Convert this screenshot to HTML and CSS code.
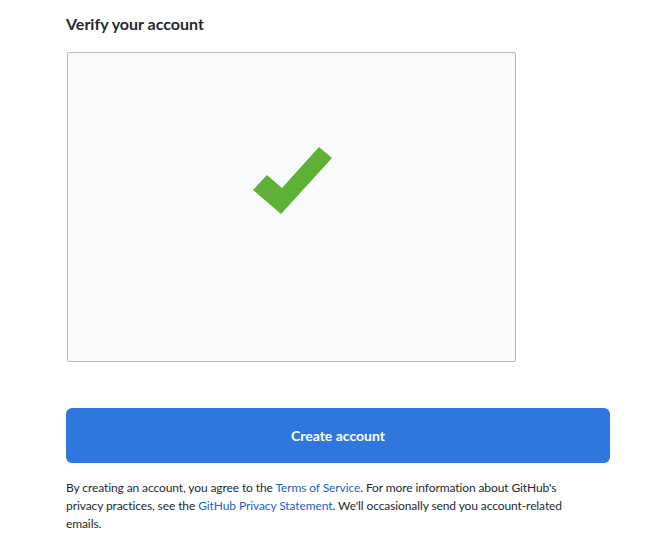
FILE: index.html
```html
<!DOCTYPE html>
<html>
<head>
<meta charset="utf-8">
<link rel="stylesheet" href="styles.css">
</head>
<body>
<main class="page">
  <h2 class="title">Verify your account</h2>
  <div class="captcha">
    <svg class="check" width="80" height="68" viewBox="253 147 80 68">
      <polygon points="253,190 267,175 282,188 319,147 332,158 281,214" fill="#5db134"/>
    </svg>
  </div>
  <button class="create">Create account</button>
  <p class="legal">By creating an account, you agree to the <a href="#">Terms of Service</a>. For more information about GitHub's privacy practices, see the <a href="#">GitHub Privacy Statement</a>. We'll occasionally send you account-related emails.</p>
</main>
</body>
</html>
```
FILE: styles.css
```css
html, body {
  margin: 0;
  padding: 0;
  background: #ffffff;
}
body {
  font-family: Lato, "Liberation Sans", sans-serif;
  color: #24292f;
}
.page {
  padding: 12px 56px 0 66px;
  width: 544px;
}
.title {
  margin: 0;
  font-size: 16px;
  font-weight: 700;
  line-height: 24px;
  color: #24292f;
}
.captcha {
  margin-top: 16px;
  margin-left: 1px;
  width: 447px;
  height: 308px;
  border: 1px solid #b9b9b9;
  border-radius: 2px;
  background: #f9fafb;
  display: flex;
  align-items: flex-start;
}
.check {
  display: block;
  margin-top: 94px;
  margin-left: 185px;
}
.create {
  display: block;
  margin-top: 46px;
  width: 544px;
  height: 55px;
  border: none;
  border-radius: 6px;
  background: #2e77de;
  color: #ffffff;
  font-family: inherit;
  font-size: 14px;
  font-weight: 700;
  cursor: pointer;
}
.legal {
  margin: 16px 0 0;
  width: 530px;
  font-size: 12px;
  letter-spacing: -0.1px;
  line-height: 18px;
  color: #24292f;
}
.legal a {
  color: #1a5fd0;
  text-decoration: none;
}
```
